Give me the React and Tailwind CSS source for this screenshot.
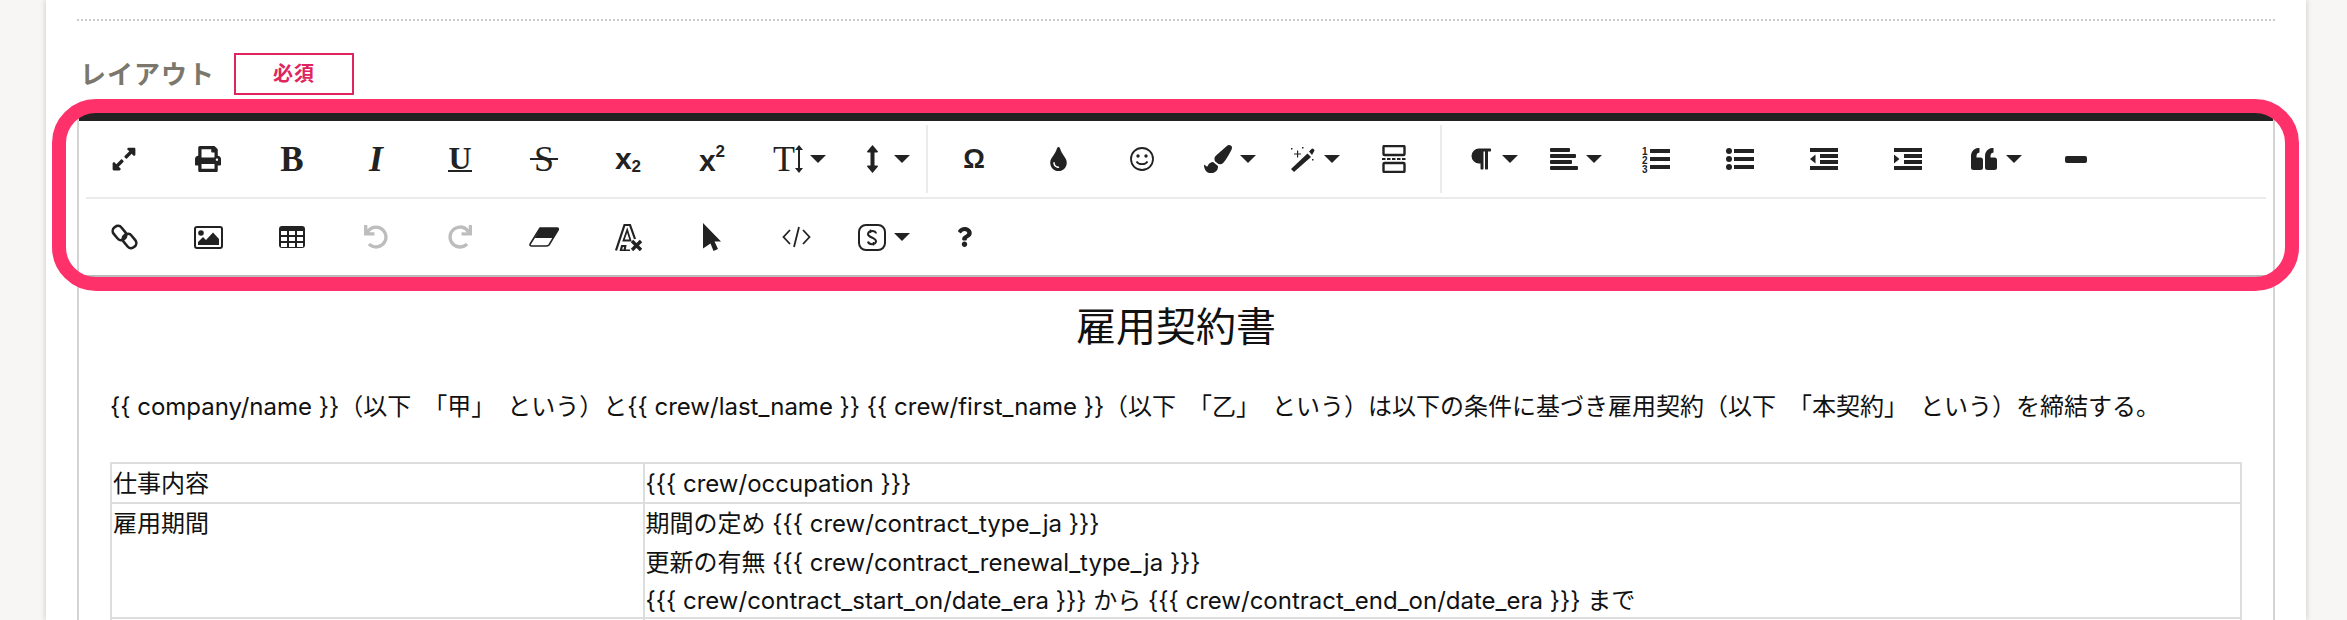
import { FaExpandAlt, FaPaintBrush, FaParagraph, FaPrint, FaQuestion, FaRedo, FaTint, FaUndo } from 'react-icons/fa';

const Caret = () => (
  <svg viewBox="0 0 16 8" className="h-2 w-4 shrink-0 fill-[#222]">
    <path d="M0 0H16L8 8Z" />
  </svg>
);

const Btn = ({ children }) => (
  <div className="flex h-[76px] w-[84px] shrink-0 items-center justify-center text-[#222]">{children}</div>
);

const DropBtn = ({ children }) => (
  <div className="flex h-[76px] w-[84px] shrink-0 items-center text-[#222]">
    <div className="-mr-3 flex w-[68px] shrink-0 items-center justify-center">{children}</div>
    <Caret />
  </div>
);

const Sep = () => <div className="mx-1 h-[68px] w-[2px] shrink-0 bg-[#ebebeb]" />;

const Bars = ({ widths }) => (
  <svg viewBox="0 0 28 22" className="h-[22px] w-7 fill-[#222]">
    {widths.map((w, i) => (
      <rect key={i} x="0" y={i * 6} width={w} height="4" rx="1" />
    ))}
  </svg>
);

const Indent = ({ flip }) => (
  <svg viewBox="0 0 28 22" className="h-[22px] w-7 fill-[#222]">
    <rect width="28" height="4" />
    <rect x="10" y="6" width="18" height="4" />
    <rect x="10" y="12" width="18" height="4" />
    <rect y="18" width="28" height="4" />
    <path d={flip ? 'M0 6.5V15.5L5.5 11Z' : 'M5.5 6.5V15.5L0 11Z'} />
  </svg>
);

const ToolbarRow1 = () => (
  <div className="flex items-center pl-[3px]">
    <Btn><FaExpandAlt className="h-[26px] w-[26px]" /></Btn>
    <Btn><FaPrint className="h-[26px] w-[26px]" /></Btn>
    <Btn><span className="font-['Liberation_Serif',serif] text-[35px] leading-none font-bold">B</span></Btn>
    <Btn><span className="font-['Liberation_Serif',serif] text-[36px] leading-none font-bold italic">I</span></Btn>
    <Btn><span className="border-b-2 border-[#222] font-['Liberation_Serif',serif] text-[32px] leading-[24px] font-bold">U</span></Btn>
    <Btn>
      <span className="relative flex w-7 justify-center font-['Liberation_Serif',serif] text-[36px] leading-none">
        S
        <span className="absolute top-[17px] left-0 h-[2px] w-7 bg-[#222]" />
      </span>
    </Btn>
    <Btn>
      <span className="flex items-end font-['Liberation_Sans',sans-serif] font-bold">
        <span className="text-[30px] leading-[24px]">x</span>
        <span className="-mb-[3px] text-[17px] leading-[14px]">2</span>
      </span>
    </Btn>
    <Btn>
      <span className="flex items-start font-['Liberation_Sans',sans-serif] font-bold">
        <span className="mt-[4px] text-[30px] leading-[24px]">x</span>
        <span className="text-[17px] leading-[14px]">2</span>
      </span>
    </Btn>
    <DropBtn>
      <span className="flex items-center font-['Liberation_Serif',serif] text-[36px] leading-none">
        T
        <svg viewBox="0 0 8 28" className="h-[28px] w-2 fill-[#222]">
          <path d="M4 0L8 5H5V23H8L4 28L0 23H3V5H0Z" />
        </svg>
      </span>
    </DropBtn>
    <DropBtn>
      <svg viewBox="0 0 11 28" className="h-7 w-[11px] fill-[#222]">
        <path d="M5.5 0L11 6.5Q11 7.5 10 7.5H7.5V20.5H10Q11 20.5 11 21.5L5.5 28L0 21.5Q0 20.5 1 20.5H3.5V7.5H1Q0 7.5 0 6.5Z" />
      </svg>
    </DropBtn>
    <Sep />
    <Btn><span className="font-['Liberation_Sans',sans-serif] text-[27px] leading-none font-bold">Ω</span></Btn>
    <Btn><FaTint className="h-[24px] w-[17px]" /></Btn>
    <Btn>
      <svg viewBox="0 0 24 24" className="h-6 w-6 fill-none stroke-[#222]">
        <circle cx="12" cy="12" r="11" strokeWidth="1.8" />
        <circle cx="8" cy="9" r="1.7" className="fill-[#222] stroke-0" />
        <circle cx="16" cy="9" r="1.7" className="fill-[#222] stroke-0" />
        <path d="M6.5 14.5C8.5 18 15.5 18 17.5 14.5" strokeWidth="1.8" />
      </svg>
    </Btn>
    <DropBtn><FaPaintBrush className="h-7 w-7" /></DropBtn>
    <DropBtn>
      <svg viewBox="0 0 25 25" className="h-[25px] w-[25px] fill-[#222]">
        <path d="M17.5 6.5L21 10L4 25L1 22Z" />
        <path d="M19 4.5L21.5 2Q22.5 1 23.5 2L24 2.5Q25 3.5 24 4.5L22 8Z" />
        <path d="M7 3.5H8.2V6.5H11V7.5H8.2V10.5H7V7.5H4V6.5H7Z" />
        <rect x="1" y="1" width="1.5" height="1.5" />
        <rect x="12" y="0" width="1.5" height="1.5" />
        <rect x="22" y="12" width="1.5" height="1.5" />
      </svg>
    </DropBtn>
    <Btn>
      <svg viewBox="0 0 24 28" className="h-7 w-6 fill-none stroke-[#222]">
        <rect x="1.5" y="1" width="21" height="9" rx="1" strokeWidth="2.4" />
        <rect x="1.5" y="18" width="21" height="9" rx="1" strokeWidth="2.4" />
        <path d="M0 14H24" strokeWidth="2" strokeDasharray="3.5 1.5" />
      </svg>
    </Btn>
    <Sep />
    <DropBtn><FaParagraph className="h-[26px] w-[21px]" /></DropBtn>
    <DropBtn><Bars widths={[20, 26, 22, 28]} /></DropBtn>
    <Btn>
      <svg viewBox="0 0 28 27" className="h-[27px] w-7 fill-[#222]">
        <rect x="8" y="3" width="20" height="4" />
        <rect x="8" y="11" width="20" height="4" />
        <rect x="8" y="19" width="20" height="4" />
        <text x="0" y="9" className="font-['Liberation_Sans',sans-serif] text-[10px] font-bold">1</text>
        <text x="0" y="18" className="font-['Liberation_Sans',sans-serif] text-[10px] font-bold">2</text>
        <text x="0" y="27" className="font-['Liberation_Sans',sans-serif] text-[10px] font-bold">3</text>
      </svg>
    </Btn>
    <Btn>
      <svg viewBox="0 0 28 22" className="h-[22px] w-7 fill-[#222]">
        <circle cx="3" cy="3" r="3" />
        <circle cx="3" cy="11" r="3" />
        <circle cx="3" cy="19" r="3" />
        <rect x="8" y="1" width="20" height="4" />
        <rect x="8" y="9" width="20" height="4" />
        <rect x="8" y="17" width="20" height="4" />
      </svg>
    </Btn>
    <Btn><Indent /></Btn>
    <Btn><Indent flip /></Btn>
    <DropBtn>
      <svg viewBox="0 0 26 22" className="h-[22px] w-[26px] fill-[#222]">
        <path d="M7 0C2.5 .5 0 4 0 8.5V19.5Q0 22 2.5 22H9.5Q12 22 12 19.5V12Q12 9.5 9.5 9.5H5.5V8C5.5 6 6.5 4.8 8.5 4.5V0Z" />
        <path d="M21 0C16.5 .5 14 4 14 8.5V19.5Q14 22 16.5 22H23.5Q26 22 26 19.5V12Q26 9.5 23.5 9.5H19.5V8C19.5 6 20.5 4.8 22.5 4.5V0Z" />
      </svg>
    </DropBtn>
    <Btn>
      <svg viewBox="0 0 22 7" className="h-[7px] w-[22px] fill-[#222]">
        <rect width="22" height="7" rx="2" />
      </svg>
    </Btn>
  </div>
);

const ToolbarRow2 = () => (
  <div className="flex items-center pl-[3px]">
    <Btn>
      <svg viewBox="0 0 27 26" className="h-[26px] w-[27px] fill-none stroke-[#222]" strokeWidth="2.6">
        <rect x="1" y="4" width="15" height="10" rx="4.5" transform="rotate(50 8.5 9)" />
        <rect x="11" y="12" width="15" height="10" rx="4.5" transform="rotate(50 18.5 17)" />
      </svg>
    </Btn>
    <Btn>
      <svg viewBox="0 0 29 23" className="h-[23px] w-[29px] fill-[#222]">
        <rect x="1" y="1" width="27" height="21" rx="2" className="fill-none stroke-[#222]" strokeWidth="2" />
        <circle cx="7" cy="7" r="2.8" />
        <path d="M4 19V16L9 11L12 14L19 6.5L25 13V19Z" />
      </svg>
    </Btn>
    <Btn>
      <svg viewBox="0 0 26 22" className="h-[22px] w-[26px] fill-[#222]">
        <rect width="26" height="22" rx="3" />
        {[5, 11, 17].map((y) =>
          [2, 10, 18].map((x) => <rect key={`${x}-${y}`} x={x} y={y} width="6" height="4" className="fill-white" />),
        )}
      </svg>
    </Btn>
    <Btn><FaUndo className="h-6 w-6 text-[#bdbdbd]" /></Btn>
    <Btn><FaRedo className="h-6 w-6 text-[#bdbdbd]" /></Btn>
    <Btn>
      <svg viewBox="0 0 30 20" className="h-5 w-[30px]">
        <path d="M11 1H28Q30 1 29 3L20 18Q19 19 17 19H3Q0 19 1.5 16.5Z" className="fill-white stroke-[#222]" strokeWidth="1.6" />
        <path d="M11 1H28Q30 1 29 3L24 11H5.8Z" className="fill-[#222]" />
      </svg>
    </Btn>
    <Btn>
      <svg viewBox="0 0 27 27" className="h-[27px] w-[27px] fill-none stroke-[#222]">
        <path d="M1 26.5L9.5 1H15L20 15M15 26.5H9.5L10.3 22H7L5.8 26.5Z" strokeWidth="2.2" />
        <path d="M8.5 16.5L12.2 6L15.5 16.5Z" strokeWidth="1.8" />
        <path d="M17 17L26 26M26 17L17 26" strokeWidth="3.4" />
      </svg>
    </Btn>
    <Btn>
      <svg viewBox="0 0 18 28" className="h-7 w-[18px] fill-[#222]">
        <path d="M0 0L18 18.5H11.5L15 26L10.5 28L7.5 20.5L0 25.5Z" />
      </svg>
    </Btn>
    <Btn>
      <svg viewBox="0 0 29 22" className="h-[22px] w-[29px] fill-none stroke-[#222]" strokeWidth="1.8">
        <path d="M8 4L1.5 11L8 18M21 4L27.5 11L21 18M17 1L12 21" />
      </svg>
    </Btn>
    <DropBtn>
      <svg viewBox="0 0 28 27" className="h-[27px] w-7 fill-none stroke-[#222]" strokeWidth="2">
        <rect x="1" y="1" width="26" height="25" rx="7" />
        <path d="M18 9.5C18 6 10.5 6 10 10C9.5 13.5 18.5 13.5 18 17.5C17.5 21 10.5 21 10 17.5" />
        <path d="M12.5 5.5V9M15.5 18V21.5" strokeWidth="1.4" />
      </svg>
    </DropBtn>
    <Btn><FaQuestion className="h-5 w-[15px]" /></Btn>
  </div>
);

const App = () => (
  <div className="relative flex h-[620px] overflow-hidden bg-[#f7f6f4] font-['Inter','Noto_Sans_CJK_JP',sans-serif] text-[24px] leading-[38.4px] text-[#111]">
    <div className="ml-[46px] w-[2260px] bg-white px-[31px] shadow-[0_0_6px_rgba(0,0,0,0.2)]">
      <div className="mt-[19px] border-t-2 border-dotted border-[#ccc]" />

      <div className="mt-8 flex h-[42px] items-center pl-[3px]">
        <span className="mt-[2px] w-[154px] text-[26px] leading-none font-bold tracking-[1px] text-[#7c776c]">レイアウト</span>
        <span className="flex h-[42px] w-[120px] items-center justify-center border-2 border-[#e0245e] text-[20px] font-bold tracking-[1px] text-[#e0245e]">
          必須
        </span>
      </div>

      <div className="mt-[18px] border-x-2 border-[#d4d4d4]">
        <div className="border-t-8 border-b-2 border-t-[#222] border-b-[#bbb]">
          <ToolbarRow1 />
          <div className="mx-[7px] h-[2px] bg-[#ebebeb]" />
          <ToolbarRow2 />
        </div>

        <div className="pr-[31px] pl-[31px]">
          <h1 className="pt-[26px] text-center text-[40px] leading-[48px]">雇用契約書</h1>
          <p className="mt-[37px]">
            {'{{ company/name }}（以下　「甲」　という）と{{ crew/last_name }} {{ crew/first_name }}（以下　「乙」　という）は以下の条件に基づき雇用契約（以下　「本契約」　という）を締結する。'}
          </p>
          <table className="mt-9 w-full table-fixed border-collapse">
            <tbody>
              <tr>
                <td className="w-1/4 border-2 border-[#ddd] px-[1px] pt-[2px] align-top leading-[36px]">仕事内容</td>
                <td className="border-2 border-[#ddd] px-[1px] pt-[2px] align-top leading-[36px]">{'{{{ crew/occupation }}}'}</td>
              </tr>
              <tr>
                <td className="border-2 border-[#ddd] px-[1px] pt-[1px] align-top">雇用期間</td>
                <td className="border-2 border-[#ddd] px-[1px] pt-[1px] align-top">
                  <div>{'期間の定め {{{ crew/contract_type_ja }}}'}</div>
                  <div>{'更新の有無 {{{ crew/contract_renewal_type_ja }}}'}</div>
                  <div className="-mb-1">{'{{{ crew/contract_start_on/date_era }}} から {{{ crew/contract_end_on/date_era }}} まで'}</div>
                </td>
              </tr>
              <tr>
                <td className="h-10 border-2 border-[#ddd]" />
                <td className="h-10 border-2 border-[#ddd]" />
              </tr>
            </tbody>
          </table>
        </div>
      </div>
    </div>

    {/* highlight drawn over the toolbar */}
    <div className="absolute top-[99px] left-[52px] h-[192px] w-[2247px] rounded-[44px] border-[14px] border-[#ff316b]" />
  </div>
);

export default App;
